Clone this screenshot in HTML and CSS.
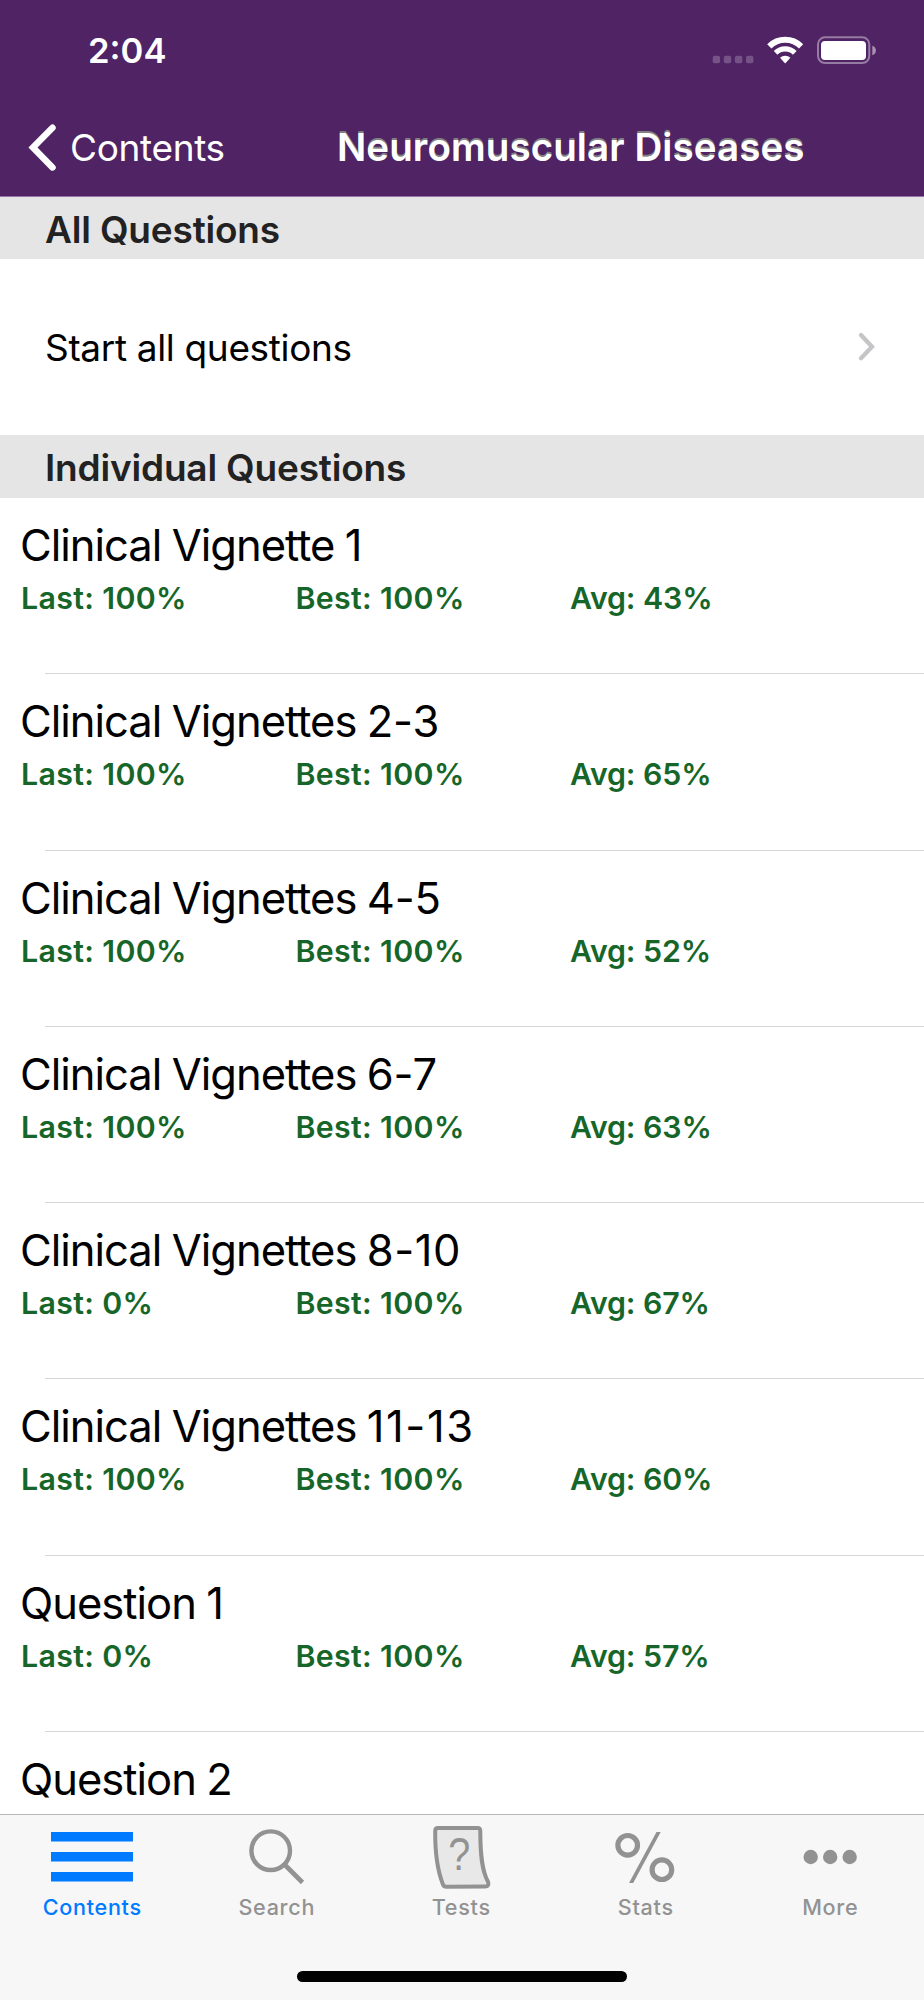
FILE: index.html
```html
<!DOCTYPE html>
<html lang="en">
<head>
<meta charset="utf-8">
<title>Neuromuscular Diseases</title>
<link rel="stylesheet" href="styles.css">
</head>
<body>
<div class="screen">
  <header class="top">
    <div class="status">
      <span class="time">2:04</span>
      <svg class="status-icons" width="166" height="30" viewBox="0 0 166 30">
        <g fill="#fff" fill-opacity=".22"><rect x=".7" y="19.800" width="7.400" height="7.400" rx="2"/><rect x="11.800" y="19.800" width="7.400" height="7.400" rx="2"/><rect x="22.900" y="19.800" width="7.400" height="7.400" rx="2"/><rect x="34" y="19.800" width="7.400" height="7.400" rx="2"/></g>
        <g fill="none" stroke="#fff"><path d="M57.300 10.400a22.600 22.600 0 0 1 31.800 0" stroke-width="6"/><path d="M63.600 16.900a13.600 13.600 0 0 1 19.200 0" stroke-width="5.200"/></g>
        <path d="M68 21.800a7.400 7.400 0 0 1 10.400 0L73.200 27.400z" fill="#fff"/>
        <rect x="106" y="1.300" width="51.300" height="25.700" rx="7" fill="none" stroke="#fff" stroke-opacity=".4" stroke-width="2"/>
        <rect x="109" y="5" width="45" height="19" rx="4" fill="#fff"/>
        <path d="M160.300 9.700q3.600 1.300 3.600 4.800t-3.600 4.800z" fill="#fff" fill-opacity=".5"/>
      </svg>
    </div>
    <nav class="nav">
      <a class="back"><svg width="28" height="50" viewBox="0 0 28 50"><path d="M24.500 5.700 5 25.500 24.500 45.400" fill="none" stroke="#fff" stroke-width="6.500" stroke-linecap="round"/></svg><span>Contents</span></a>
      <h1 class="title">Neuromuscular Diseases</h1>
    </nav>
  </header>
  <main class="list">
    <h2 class="section first">All Questions</h2>
    <div class="start"><span>Start all questions</span><svg width="18" height="30" viewBox="0 0 18 30"><path d="M3 3 14 14.700 3 26.200" fill="none" stroke="#c5c5c8" stroke-width="4.300" stroke-linecap="round"/></svg></div>
    <h2 class="section second">Individual Questions</h2>
    <article class="row"><h3>Clinical Vignette 1</h3><div class="scores"><span>Last: 100%</span><span>Best: 100%</span><span class="avg">Avg: 43%</span></div></article>
    <article class="row"><h3>Clinical Vignettes <span class="pair">2-3</span></h3><div class="scores"><span>Last: 100%</span><span>Best: 100%</span><span class="avg">Avg: 65%</span></div></article>
    <article class="row"><h3>Clinical Vignettes <span class="pair">4-5</span></h3><div class="scores"><span>Last: 100%</span><span>Best: 100%</span><span class="avg">Avg: 52%</span></div></article>
    <article class="row"><h3>Clinical Vignettes <span class="pair">6-7</span></h3><div class="scores"><span>Last: 100%</span><span>Best: 100%</span><span class="avg">Avg: 63%</span></div></article>
    <article class="row"><h3>Clinical Vignettes <span class="range">8-10</span></h3><div class="scores"><span>Last: 0%</span><span>Best: 100%</span><span class="avg">Avg: 67%</span></div></article>
    <article class="row"><h3>Clinical Vignettes <span class="range-wide">11-13</span></h3><div class="scores"><span>Last: 100%</span><span>Best: 100%</span><span class="avg">Avg: 60%</span></div></article>
    <article class="row"><h3>Question 1</h3><div class="scores"><span>Last: 0%</span><span>Best: 100%</span><span class="avg">Avg: 57%</span></div></article>
    <article class="row"><h3>Question 2</h3></article>
  </main>
  <footer class="tabbar">
    <div class="tabs">
      <a class="tab active"><svg width="84" height="72" viewBox="0 0 84 72"><path d="M1 17h82v9.500H1zM1 37h82v9.500H1zM1 57h82v9.500H1z" fill="#007aff"/></svg><span>Contents</span></a>
      <a class="tab"><svg width="84" height="72" viewBox="0 0 84 72" fill="none" stroke="#929292"><circle cx="35.700" cy="35.700" r="19.300" stroke-width="4.400"/><path d="M50 50 67.500 67.500" stroke-width="4.600"/></svg><span>Search</span></a>
      <a class="tab"><svg width="84" height="72" viewBox="0 0 84 72"><path d="M19 12.900H58.500q2.800 0 2.800 3c0 24 1.600 40 7.800 51q1.300 4.500-3 4.600L27.500 71.800q-3 0-3.700-2.700C18 54 16 36 16.200 16q0-3.100 2.800-3.100z" fill="#e8e8e8" stroke="#929292" stroke-width="4"/><text class="glyph" transform="translate(40.300 55) scale(.86 1)" text-anchor="middle">?</text></svg><span>Tests</span></a>
      <a class="tab"><svg width="84" height="72" viewBox="0 0 84 72"><g fill="none" stroke="#929292" stroke-width="5.200"><circle cx="23.700" cy="30.300" r="9.800"/><circle cx="57.900" cy="54.700" r="9.800"/></g><path d="M52.500 17h4.200L29.200 68H25z" fill="#929292"/></svg><span>Stats</span></a>
      <a class="tab"><svg width="84" height="72" viewBox="0 0 84 72" fill="#929292"><circle cx="22.700" cy="42" r="7.200"/><circle cx="42.200" cy="42" r="7.200"/><circle cx="61.700" cy="42" r="7.200"/></svg><span>More</span></a>
    </div>
    <div class="home"></div>
  </footer>
</div>
</body>
</html>
```
FILE: styles.css
```css
* { box-sizing: border-box; }
body { margin: 0; font-family: Inter, "Liberation Sans", sans-serif; background: #fff; color: #000; }
h1, h2, h3 { margin: 0; }
svg { display: block; flex: none; overflow: visible; }
.screen { display: flex; flex-direction: column; width: 924px; height: 2000px; overflow: hidden; }
.top { height: 197px; flex: none; background: #502365; border-bottom: 1px solid #9a6fae; color: #fff; }
.status { display: flex; justify-content: space-between; height: 98px; padding: 36px 46px 0 88px; }
.time { font-size: 34.600px; font-weight: 600; line-height: 29px; }
.nav { display: flex; align-items: center; height: 98px; padding: 0 0 0 28px; }
.back { display: flex; align-items: center; gap: 14px; width: 309px; font-size: 37px; letter-spacing: -.35px; line-height: 48px; }
.back span { padding-top: 2px; }
.title { font-size: 38.500px; font-weight: 600; letter-spacing: .1px; line-height: 48px; white-space: nowrap; text-shadow: 0 -2px 0 #808080; }
.list { flex: 1; min-height: 0; overflow: hidden; }
.section { padding-left: 45px; background: #e5e5e5; color: #222; font-size: 37px; font-weight: 600; letter-spacing: -.18px; line-height: 65px; }
.first { height: 62px; }
.second { height: 63px; line-height: 66px; }
.start { display: flex; justify-content: space-between; align-items: center; height: 176px; padding: 0 48px 0 45px; font-size: 37px; letter-spacing: -.34px; }
.row { display: flex; flex-direction: column; height: 176.300px; padding: 20px 0 0 20px; }
.row::after { content: ""; height: 1px; margin: auto 0 0 25px; background: #d6d6d8; flex: none; }
.row h3 { font-size: 43.500px; font-weight: 400; letter-spacing: -1px; word-spacing: -.8px; line-height: 54px; white-space: nowrap; }
.pair { letter-spacing: -.2px; }
.range { letter-spacing: .5px; }
.range-wide { letter-spacing: 1.600px; }
.scores { display: grid; grid-template-columns: 274.500px 274.500px 1fr; margin: 6px 0 0 1px; color: #176629; font-size: 30.300px; font-weight: 600; letter-spacing: .35px; line-height: 41px; }
.avg { letter-spacing: -.1px; }
.tabbar { display: flex; flex-direction: column; align-items: center; height: 186px; flex: none; border-top: 1px solid #b7b7b7; background: #f7f7f7; }
.tabs { display: grid; grid-template-columns: repeat(5, 1fr); align-self: flex-start; width: 922.500px; height: 156px; }
.tab { display: flex; flex-direction: column; align-items: center; color: #929292; font-size: 21.600px; font-weight: 500; letter-spacing: .7px; line-height: 28px; }
.tab span { margin-top: 6px; }
.glyph { fill: #929292; font: 46px "Liberation Sans", sans-serif; letter-spacing: 0; }
.active { color: #007aff; }
.home { width: 330px; height: 11px; border-radius: 6px; background: #000; }
```
